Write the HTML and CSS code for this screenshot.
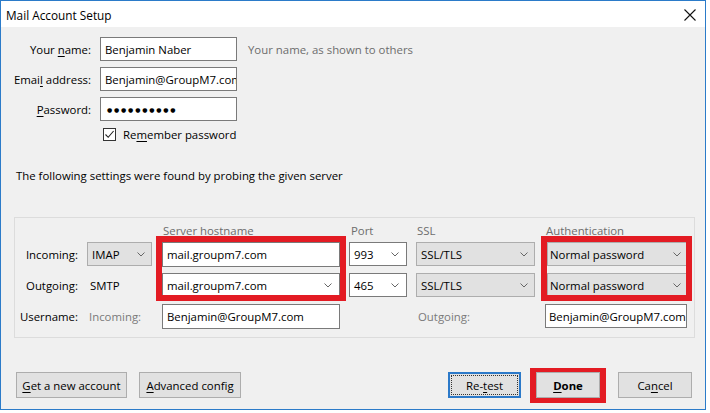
FILE: index.html
```html
<!DOCTYPE html>
<html lang="en">
  <head>
    <meta charset="UTF-8" />
    <title>Mail Account Setup</title>
    <link rel="stylesheet" href="styles.css">
  </head>
  <body>
    <div class="dialog">
      <div class="titlebar">
        <span class="title">Mail Account Setup</span>
        <svg class="close" width="12" height="12" viewBox="0 0 12 12">
          <path d="M0.5 0.5 L11.5 11.5 M11.5 0.5 L0.5 11.5" stroke="#111" stroke-width="1.1" fill="none" />
        </svg>
      </div>

      <div class="content">
        <div class="identity">
          <span class="field-label">Your <u>n</u>ame:</span>
          <div class="textbox">Benjamin Naber</div>
          <span class="hint">Your name, as shown to others</span>

          <span class="field-label">Emai<u>l</u> address:</span>
          <div class="textbox">Benjamin@GroupM7.com</div>
          <span></span>

          <span class="field-label"><u>P</u>assword:</span>
          <div class="textbox password">●●●●●●●●●●</div>
          <span></span>

          <span></span>
          <div class="remember">
            <span class="checkbox">
              <svg width="11" height="11" viewBox="0 0 11 11">
                <path d="M1.5 5.5 L4.2 8.3 L9.6 2" stroke="#222" stroke-width="1.1" fill="none" />
              </svg>
            </span>
            Re<u>m</u>ember password
          </div>
        </div>

        <p class="found">The following settings were found by probing the given server</p>

        <div class="server-group">
          <div class="srow heads">
            <span class="col-head c3">Server hostname</span>
            <span class="col-head c4">Port</span>
            <span class="col-head c5">SSL</span>
            <span class="col-head c6">Authentication</span>
          </div>

          <div class="srow incoming">
            <span class="row-label c1">Incoming:</span>
            <div class="combo protocol c2">IMAP <svg class="chevron" width="8" height="5" viewBox="0 0 8 5"><path d="M0.5 0.5 L4 4 L7.5 0.5" stroke="#666" fill="none" /></svg></div>
            <div class="textbox host c3">mail.groupm7.com</div>
            <div class="textbox port c4">993 <svg class="chevron" width="8" height="5" viewBox="0 0 8 5"><path d="M0.5 0.5 L4 4 L7.5 0.5" stroke="#666" fill="none" /></svg></div>
            <div class="combo ssl c5">SSL/TLS <svg class="chevron" width="8" height="5" viewBox="0 0 8 5"><path d="M0.5 0.5 L4 4 L7.5 0.5" stroke="#666" fill="none" /></svg></div>
            <div class="combo auth c6">Normal password <svg class="chevron" width="8" height="5" viewBox="0 0 8 5"><path d="M0.5 0.5 L4 4 L7.5 0.5" stroke="#666" fill="none" /></svg></div>
          </div>

          <div class="srow outgoing">
            <span class="row-label c1">Outgoing:</span>
            <span class="plain c2">SMTP</span>
            <div class="textbox host c3">mail.groupm7.com <svg class="chevron" width="8" height="5" viewBox="0 0 8 5"><path d="M0.5 0.5 L4 4 L7.5 0.5" stroke="#666" fill="none" /></svg></div>
            <div class="textbox port c4">465 <svg class="chevron" width="8" height="5" viewBox="0 0 8 5"><path d="M0.5 0.5 L4 4 L7.5 0.5" stroke="#666" fill="none" /></svg></div>
            <div class="combo ssl c5">SSL/TLS <svg class="chevron" width="8" height="5" viewBox="0 0 8 5"><path d="M0.5 0.5 L4 4 L7.5 0.5" stroke="#666" fill="none" /></svg></div>
            <div class="combo auth c6">Normal password <svg class="chevron" width="8" height="5" viewBox="0 0 8 5"><path d="M0.5 0.5 L4 4 L7.5 0.5" stroke="#666" fill="none" /></svg></div>
          </div>

          <div class="srow username">
            <span class="row-label c1">Username:</span>
            <span class="plain muted c2">Incoming:</span>
            <div class="textbox host c3">Benjamin@GroupM7.com</div>
            <span class="plain muted out-label c5">Outgoing:</span>
            <div class="textbox user-out c6">Benjamin@GroupM7.com</div>
          </div>

          <div class="marker c3"></div>
          <div class="marker marker-auth c6"></div>
        </div>

        <div class="footer">
          <button class="btn new-account"><u>G</u>et a new account</button>
          <button class="btn advanced"><u>A</u>dvanced config</button>
          <span class="spacer"></span>
          <button class="btn retest">Re-<u>t</u>est</button>
          <span class="done-frame"><button class="btn done"><u>D</u>one</button></span>
          <button class="btn cancel">Ca<u>n</u>cel</button>
        </div>
      </div>
    </div>
  </body>
</html>
```

FILE: styles.css
```css
body {
  margin: 0;
  background-color: #fff;
  font-family: "Open Sans", "Noto Sans", sans-serif;
  font-size: 11.4px;
  color: #000;
}

u {
  text-decoration-thickness: 1px;
  text-underline-offset: 2px;
}

.dialog {
  width: 704px;
  height: 408px;
  border: 1px solid #2b7bc9;
  background-color: #f0f0f0;
  display: flex;
  flex-direction: column;
}

.titlebar {
  flex: none;
  height: 26px;
  background-color: #fff;
  display: flex;
  align-items: center;
  justify-content: space-between;
  padding: 0 9px 0 5px;
}

.title {
  font-size: 11.8px;
  margin-top: 1px;
}

.close {
  margin-top: 2px;
}

.content {
  flex: 1;
  display: flex;
  flex-direction: column;
}

/* identity fields */
.identity {
  display: grid;
  grid-template-columns: 90px 137px auto;
  grid-template-rows: 24px 24px 24px 14px;
  column-gap: 9px;
  row-gap: 6px;
  margin-top: 10px;
}

.field-label {
  text-align: right;
  align-self: center;
}

.hint {
  align-self: center;
  color: #6d6d6d;
  margin-left: 2px;
}

.textbox {
  background-color: #fff;
  border: 1px solid #7a7a7a;
  box-sizing: border-box;
  height: 24px;
  padding: 0 4px;
  display: flex;
  align-items: center;
  justify-content: space-between;
  white-space: nowrap;
  overflow: hidden;
}

.password {
  font-family: "DejaVu Sans", sans-serif;
  font-size: 6px;
  letter-spacing: 1.8px;
  justify-content: flex-start;
  padding-left: 6px;
}

.remember {
  display: flex;
  align-items: center;
  margin-left: 3px;
  margin-top: 1px;
  white-space: nowrap;
}

.checkbox {
  width: 11px;
  height: 11px;
  border: 1px solid #333;
  background-color: #fff;
  margin-right: 7px;
  display: flex;
}

.found {
  margin: 27px 0 0 15px;
  line-height: 16px;
}

/* server settings */
.server-group {
  display: grid;
  grid-template-columns: 72px 69px 190px 66px 129px 152px;
  grid-template-rows: 24px 31px 31px 31px;
  margin: 33px 10px 0 13px;
  padding-bottom: 2px;
  border: 1px solid #dcdcdc;
}

.srow {
  display: contents;
}

.heads > * { grid-row: 1; }
.incoming > * { grid-row: 2; }
.outgoing > * { grid-row: 3; }
.username > * { grid-row: 4; }

.c1 { grid-column: 1; }
.c2 { grid-column: 2; }
.c3 { grid-column: 3; }
.c4 { grid-column: 4; }
.c5 { grid-column: 5; }
.c6 { grid-column: 6; }

.col-head {
  color: #6d6d6d;
  align-self: center;
  padding-left: 7px;
}

.col-head.c4 {
  padding-left: 5px;
}

.col-head.c5 {
  padding-left: 5px;
}

.col-head.c6 {
  padding-left: 5px;
}

.row-label {
  text-align: right;
  padding-right: 9px;
  line-height: 25px;
  align-self: start;
}

.plain {
  line-height: 25px;
  align-self: start;
  padding-left: 3px;
}

.muted {
  color: #7a7a7a;
  padding-left: 2px;
}

.out-label {
  padding-left: 6px;
}

.combo {
  background-color: #e1e1e1;
  border: 1px solid #adadad;
  box-sizing: border-box;
  height: 24px;
  padding: 0 6px 0 4px;
  display: flex;
  align-items: center;
  justify-content: space-between;
  white-space: nowrap;
  align-self: start;
}

.protocol {
  width: 65px;
}

.host {
  margin: 0 6px;
  height: 25px;
  align-self: start;
  padding-right: 7px;
}

.port {
  margin-left: 3px;
  width: 58px;
  align-self: start;
  padding-right: 7px;
}

.ssl {
  margin-left: 4px;
  width: 119px;
}

.auth {
  margin: 0 5px 0 6px;
  padding-left: 2px;
}

.user-out {
  margin: 0 6px 0 4px;
  align-self: start;
  padding-left: 3px;
}

.marker {
  grid-row: 2 / 4;
  border: 6px solid #e31b23;
  margin-top: -6px;
  margin-bottom: 3px;
}

.marker-auth {
  margin-right: 1px;
}

/* buttons */
.footer {
  display: flex;
  align-items: center;
  margin-top: 34px;
  padding: 0 13px 0 15px;
}

.btn {
  height: 26px;
  box-sizing: border-box;
  border: 1px solid #adadad;
  background-color: #e1e1e1;
  font-family: inherit;
  font-size: 11.4px;
  color: #000;
  padding: 0;
}

.new-account {
  width: 111px;
}

.advanced {
  width: 102px;
  margin-left: 12px;
}

.spacer {
  flex: 1;
}

.retest {
  width: 73px;
  border: 2px solid #2b79c9;
  position: relative;
}

.retest::after {
  content: "";
  position: absolute;
  top: 1px;
  left: 1px;
  right: 1px;
  bottom: 1px;
  border: 1px dotted #333;
}

.done-frame {
  display: flex;
  border-style: solid;
  border-color: #e31b23;
  border-width: 4px 6px 5px 6px;
  margin: -4px 0 -5px 9px;
}

.done {
  width: 64px;
  font-weight: bold;
}

.cancel {
  width: 74px;
  margin-left: 12px;
}
```
